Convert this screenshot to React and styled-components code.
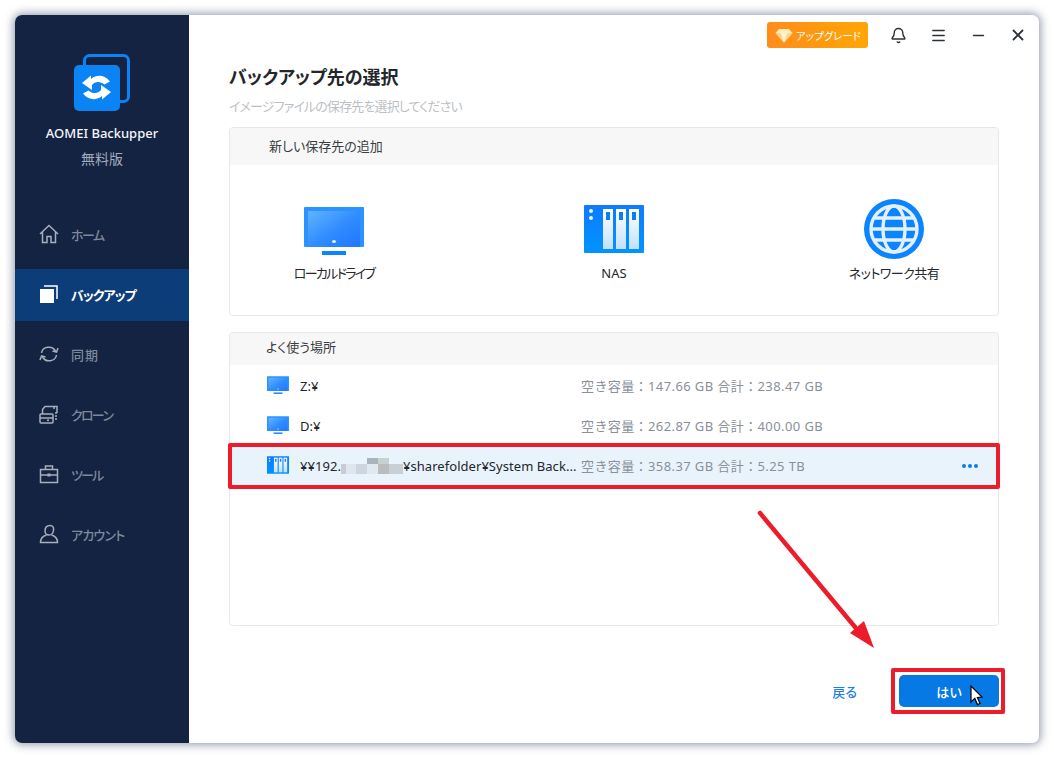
import React from 'react'
import styled, { createGlobalStyle } from 'styled-components'
import { Bell, Menu, Minus, X } from 'lucide-react'

const Global = createGlobalStyle`
  html, body { margin: 0; padding: 0; background: #fff; }
  body {
    font-family: "Noto Sans", "Noto Sans CJK JP", sans-serif;
    font-feature-settings: "palt";
  }
  * { box-sizing: border-box; }
`

const Page = styled.div`
  width: 1054px;
  height: 758px;
  padding: 15px;
  overflow: hidden;
`
const Win = styled.div`
  position: relative;
  width: 1024px;
  height: 728px;
  display: flex;
  border-radius: 7px;
  background: #fff;
  box-shadow: 0 0 9px 2px rgba(72, 84, 115, 0.55);
  overflow: hidden;
`
const Sidebar = styled.aside`
  width: 174px;
  flex: none;
  background: #142342;
  display: flex;
  flex-direction: column;
  align-items: stretch;
`
const Brand = styled.div`
  display: flex;
  flex-direction: column;
  align-items: center;
  padding-top: 39px;
  height: 194px;
`
const BrandName = styled.div`
  margin-top: 12px;
  color: #f4f6fa;
  font-size: 13px;
  font-weight: 500;
  line-height: 18px;
`
const Edition = styled.div`
  margin-top: 8px;
  color: #a3adbd;
  font-size: 14px;
  line-height: 18px;
`
const Nav = styled.nav`
  display: flex;
  flex-direction: column;
  gap: 8px;
`
const NavItem = styled.div`
  height: 52px;
  display: flex;
  align-items: center;
  gap: 12px;
  padding: 0 0 2px 24px;
  font-size: 13px;
  font-weight: ${p => (p.$active ? 600 : 500)};
  letter-spacing: ${p => p.$track}px;
  color: ${p => (p.$active ? '#fff' : '#7e899c')};
  background: ${p => (p.$active ? '#0c3d78' : 'transparent')};
`
const NavGlyph = styled.svg`
  width: 20px;
  height: 20px;
  flex: none;
  fill: none;
  stroke: ${p => p.$stroke || '#a7afbd'};
  stroke-width: 1.5;
`
const Main = styled.main`
  flex: 1;
  display: flex;
  flex-direction: column;
  padding: 0 40px;
  min-width: 0;
`
const TopBar = styled.div`
  height: 40px;
  margin: 0 -40px;
  padding: 7px 1px 0 0;
  display: flex;
  justify-content: flex-end;
  align-items: flex-start;
`
const Upgrade = styled.div`
  width: 101px;
  height: 26px;
  border-radius: 3px;
  background: linear-gradient(90deg, #ff8c1c, #ffa603);
  color: #fff;
  font-size: 10.5px;
  display: flex;
  align-items: center;
  gap: 3px;
  padding-left: 8px;
  margin-right: 10px;
`
const TopBtn = styled.div`
  width: 40px;
  height: 26px;
  display: flex;
  align-items: center;
  justify-content: center;
  color: #2c3138;
`
const Title = styled.h1`
  margin: 9px 0 0;
  font-size: 18px;
  line-height: 26px;
  font-weight: 700;
  color: #23262b;
`
const Sub = styled.div`
  margin-top: 7px;
  font-size: 13px;
  line-height: 18px;
  letter-spacing: -0.85px;
  color: #bcbfc4;
`
const Panel = styled.section`
  border: 1px solid #e6e8eb;
  border-radius: 4px;
  margin-top: ${p => p.$top}px;
  height: ${p => p.$height}px;
`
const PanelHead = styled.div`
  height: ${p => p.$height}px;
  padding: 0 0 ${p => p.$lift}px ${p => p.$indent}px;
  display: flex;
  align-items: center;
  background: #f7f7f7;
  border-radius: 4px 4px 0 0;
  font-size: 13px;
  color: #3a3d42;
`
const Targets = styled.div`
  display: grid;
  grid-template-columns: 208px 1fr 208px;
`
const Target = styled.div`
  height: 150px;
  padding-top: ${p => p.$pad}px;
  display: flex;
  flex-direction: column;
  align-items: center;
  font-size: 13px;
  color: #23262b;
`
const TargetLabel = styled.div`
  line-height: 18px;
  margin-top: ${p => p.$gap}px;
  letter-spacing: ${p => p.$track || 0}px;
`
const Rows = styled.div`
  display: flex;
  flex-direction: column;
  padding-top: 1px;
`
const Row = styled.div`
  position: relative;
  height: 40px;
  display: flex;
  align-items: center;
  padding: 0 0 2px 37px;
  background: ${p => (p.$selected ? '#e9f3fc' : 'transparent')};
  font-size: 13px;
`
const RowName = styled.div`
  width: 281px;
  margin: 2px 0 0 11px;
  display: flex;
  align-items: center;
  color: #23262b;
  letter-spacing: 0.05px;
  white-space: nowrap;
`
const RowInfo = styled.div`
  color: #8a8f99;
  font-size: 13px;
  font-feature-settings: normal;
  letter-spacing: 0.4px;
`
const More = styled.div`
  position: absolute;
  right: 20px;
  top: 18px;
  display: flex;
  gap: 2px;
`
const Dot = styled.i`
  width: 4px;
  height: 4px;
  border-radius: 50%;
  background: #0d7de8;
`
const RedBox = styled.div`
  position: absolute;
  left: ${p => p.$left}px;
  right: ${p => p.$right}px;
  top: ${p => p.$topOff}px;
  bottom: ${p => p.$bottomOff}px;
  border: 4px solid #ed1c2a;
  border-radius: 2px;
  pointer-events: none;
`
const Footer = styled.div`
  margin-top: 49px;
  display: flex;
  justify-content: flex-end;
  align-items: center;
  gap: 42px;
`
const Back = styled.div`
  color: #1a80ea;
  font-size: 13px;
  font-weight: 500;
`
const Confirm = styled.div`
  position: relative;
  width: 100px;
  height: 32px;
  border-radius: 5px;
  background: #0779e4;
  color: #fff;
  font-size: 13px;
  font-weight: 500;
  display: flex;
  align-items: center;
  justify-content: center;
`
const Cursor = styled.svg`
  position: absolute;
  left: 71px;
  top: 10px;
  width: 13px;
  height: 21px;
`
const Arrow = styled.svg`
  position: absolute;
  left: 735px;
  top: 490px;
  width: 130px;
  height: 150px;
  pointer-events: none;
`

const swirl = 'M9 29 L18 21.5 V25 C24 20 32 21 37 27.5 L31.5 30.5 C27.5 27 22 27 19 31 V36 Z'

const Logo = () => (
  <svg width="58" height="58" viewBox="0 0 58 58">
    <rect x="11.5" y="1.5" width="44" height="46" rx="5" fill="none" stroke="#0a84f5" strokeWidth="3" />
    <rect x="1" y="11" width="46" height="46" rx="5" fill="#0a84f5" />
    <path d={swirl} fill="#fff" />
    <path d={swirl} fill="#fff" transform="rotate(180 23.5 33.5)" />
  </svg>
)

const HomeIcon = () => (
  <NavGlyph viewBox="0 0 20 20">
    <path d="M1 10 L10 1.5 L19 10 M3.5 8 V18.5 H8 V12.5 H12 V18.5 H16.5 V8" />
  </NavGlyph>
)
const BackupIcon = () => (
  <NavGlyph viewBox="0 0 20 20" $stroke="#fff">
    <rect x="1" y="5" width="14" height="14" fill="#fff" stroke="none" />
    <path d="M5 2 H18 V15" />
  </NavGlyph>
)
const SyncIcon = () => (
  <NavGlyph viewBox="0 0 20 20">
    <path d="M2.5 9 C3.5 2.5 13 1 16.5 7 M17.5 11 C16.5 17.5 7 19 3.5 13" />
    <path d="M13.5 7 L17.5 8 L19 4 M6.5 13 L2.5 12 L1 16" />
  </NavGlyph>
)
const CloneIcon = () => (
  <NavGlyph viewBox="0 0 20 20">
    <rect x="1" y="10" width="13" height="9" rx="1" />
    <path d="M1 14 H14 M3.5 10 V5.5 L6 2.5 H15 V5 M15 2.5 H18 V9 M16 9 H18 M16 12 H18 M16 15 H18" />
    <rect x="8" y="15.5" width="2" height="1.6" fill="#a7afbd" stroke="none" />
  </NavGlyph>
)
const ToolsIcon = () => (
  <NavGlyph viewBox="0 0 20 20">
    <rect x="1.5" y="5.5" width="17" height="13" />
    <path d="M6.5 5.5 V2 H13.5 V5.5 M1.5 11 H18.5" />
    <rect x="8.5" y="9.5" width="3" height="3" fill="#a7afbd" stroke="none" />
  </NavGlyph>
)
const AccountIcon = () => (
  <NavGlyph viewBox="0 0 20 20">
    <path d="M6 7 C6 3.5 8 1.5 11 1.5 C14 1.5 15 3.5 14.5 6.5 C14 9.5 12 11 10 11 C8 11 6 9.5 6 7 Z" />
    <path d="M7.5 11 C4 12 1.5 14 1.5 18.5 H18.5 C18.5 14 16 12 12.5 11" />
  </NavGlyph>
)

const Gem = () => (
  <svg width="18" height="15" viewBox="0 0 18 15">
    <path d="M4 1 H14 L17.5 5 L9 14.5 L0.5 5 Z" fill="#fdebbd" />
    <path d="M0.5 5 H17.5 L9 14.5 Z" fill="#fbd487" />
    <path d="M5.5 5 L9 14.5 L12.5 5 Z" fill="#fff3d6" />
  </svg>
)

const Monitor = ({ w = 60, h = 50, id }) => (
  <svg width={w} height={h} viewBox="0 0 60 50">
    <defs>
      <linearGradient id={id} x1="0" y1="0" x2="1" y2="1">
        <stop offset="0" stopColor="#5fb4ff" />
        <stop offset="0.55" stopColor="#2f8bff" />
        <stop offset="1" stopColor="#2176ff" />
      </linearGradient>
    </defs>
    <rect x="0" y="0" width="60" height="40" rx="1" fill="#2b93ff" />
    <rect x="4" y="4" width="52" height="36" fill={`url(#${id})`} />
    <ellipse cx="30" cy="34.5" rx="2" ry="1.5" fill="#e4f1ff" />
    <rect x="18" y="44" width="24" height="4" fill="#0a84ff" />
  </svg>
)

const Nas = ({ w = 60, h = 48, id }) => (
  <svg width={w} height={h} viewBox="0 0 60 48">
    <defs>
      <linearGradient id={id} x1="0" y1="0" x2="0" y2="1">
        <stop offset="0" stopColor="#0e7bff" />
        <stop offset="1" stopColor="#0094ff" />
      </linearGradient>
      <linearGradient id={`${id}b`} x1="0" y1="0" x2="0" y2="1">
        <stop offset="0" stopColor="#fff" />
        <stop offset="1" stopColor="#c3e0ff" />
      </linearGradient>
    </defs>
    <rect width="60" height="48" rx="1" fill={`url(#${id})`} />
    <circle cx="7" cy="6" r="2" fill="#eaf4ff" />
    <circle cx="7" cy="13" r="2" fill="#eaf4ff" />
    {[19, 32, 45].map(x => (
      <g key={x}>
        <rect x={x} y="4" width="10" height="40" fill={`url(#${id}b)`} />
        <rect x={x + 3} y="7" width="4" height="8" fill="#0a7ef5" />
      </g>
    ))}
  </svg>
)

const Globe = () => (
  <svg width="60" height="60" viewBox="0 0 60 60">
    <circle cx="30" cy="30" r="30" fill="#0a84ff" />
    <g fill="none" stroke="#e4f0ff" strokeWidth="3.4">
      <circle cx="30" cy="30" r="23" />
      <ellipse cx="30" cy="30" rx="11" ry="23" />
      <path d="M7 30 H53 M11 19 H49 M11 41 H49" />
    </g>
  </svg>
)

// blurred part of the address: [x, width, colour] per band
const mosaicTop = [[26, 11, '#a9b3bc'], [37, 11, '#c8d0d4']]
const mosaicBottom = [
  [0, 5, '#c8ccd4'], [5, 10, '#dfe6ee'], [15, 11, '#cdd6de'], [26, 11, '#e0e9ef'],
  [37, 11, '#bbbcbe'], [48, 14, '#c8d0d6'],
]
const Mosaic = () => (
  <svg width="62" height="16" viewBox="0 0 62 16">
    {mosaicTop.map(([x, w, c]) => <rect key={x} x={x} y="0" width={w} height="6" fill={c} />)}
    {mosaicBottom.map(([x, w, c]) => <rect key={x} x={x} y="6" width={w} height="10" fill={c} />)}
  </svg>
)

const items = [
  ['ホーム', HomeIcon, -1.5],
  ['バックアップ', BackupIcon, -1, true],
  ['同期', SyncIcon, 1],
  ['クローン', CloneIcon, -1.7],
  ['ツール', ToolsIcon, -1.8],
  ['アカウント', AccountIcon, -0.8],
]

export default function App() {
  return (
    <Page>
      <Global />
      <Win>
        <Sidebar>
          <Brand>
            <Logo />
            <BrandName>AOMEI Backupper</BrandName>
            <Edition>無料版</Edition>
          </Brand>
          <Nav>
            {items.map(([label, Icon, track, active]) => (
              <NavItem key={label} $active={active} $track={track}>
                <Icon />
                {label}
              </NavItem>
            ))}
          </Nav>
        </Sidebar>
        <Main>
          <TopBar>
            <Upgrade><Gem />アップグレード</Upgrade>
            <TopBtn><Bell size={17} strokeWidth={2} /></TopBtn>
            <TopBtn><Menu size={17} strokeWidth={2} /></TopBtn>
            <TopBtn><Minus size={17} strokeWidth={2} /></TopBtn>
            <TopBtn><X size={18} strokeWidth={2.4} /></TopBtn>
          </TopBar>
          <Title>バックアップ先の選択</Title>
          <Sub>イメージファイルの保存先を選択してください</Sub>
          <Panel $top={12} $height={189}>
            <PanelHead $height={37} $indent={39} $lift={2}>新しい保存先の追加</PanelHead>
            <Targets>
              <Target $pad={42}>
                <Monitor id="m0" />
                <TargetLabel $gap={7} $track={-1.7}>ローカルドライブ</TargetLabel>
              </Target>
              <Target $pad={40}>
                <Nas id="n0" />
                <TargetLabel $gap={11}>NAS</TargetLabel>
              </Target>
              <Target $pad={34}>
                <Globe />
                <TargetLabel $gap={5} $track={-0.5}>ネットワーク共有</TargetLabel>
              </Target>
            </Targets>
          </Panel>
          <Panel $top={16} $height={294}>
            <PanelHead $height={32} $indent={36} $lift={5}>よく使う場所</PanelHead>
            <Rows>
              <Row>
                <Monitor w={22} h={19} id="m1" />
                <RowName>Z:¥</RowName>
                <RowInfo>空き容量：147.66 GB 合計：238.47 GB</RowInfo>
              </Row>
              <Row>
                <Monitor w={22} h={19} id="m2" />
                <RowName>D:¥</RowName>
                <RowInfo>空き容量：262.87 GB 合計：400.00 GB</RowInfo>
              </Row>
              <Row $selected>
                <Nas w={22} h={18} id="n1" />
                <RowName>¥¥192.<Mosaic />¥sharefolder¥System Back...</RowName>
                <RowInfo>空き容量：358.37 GB 合計：5.25 TB</RowInfo>
                <More><Dot /><Dot /><Dot /></More>
                <RedBox $left={-2} $right={-2} $topOff={-3} $bottomOff={-3} />
              </Row>
            </Rows>
          </Panel>
          <Footer>
            <Back>戻る</Back>
            <Confirm>
              はい
              <Cursor viewBox="0 0 13 21">
                <path d="M1 1 V17 L4.8 13.4 L7.4 19.6 L10 18.5 L7.4 12.5 L12 12.2 Z" fill="#fff" stroke="#000" strokeWidth="1.2" />
              </Cursor>
              <RedBox $left={-8} $right={-6} $topOff={-7} $bottomOff={-7} />
            </Confirm>
          </Footer>
        </Main>
        <Arrow viewBox="0 0 130 150">
          <path d="M10 8 L105 122" stroke="#ed1c2a" strokeWidth="4.5" strokeLinecap="round" fill="none" />
          <path d="M124 143 L100 128 L114 116 Z" fill="#ed1c2a" />
        </Arrow>
      </Win>
    </Page>
  )
}
